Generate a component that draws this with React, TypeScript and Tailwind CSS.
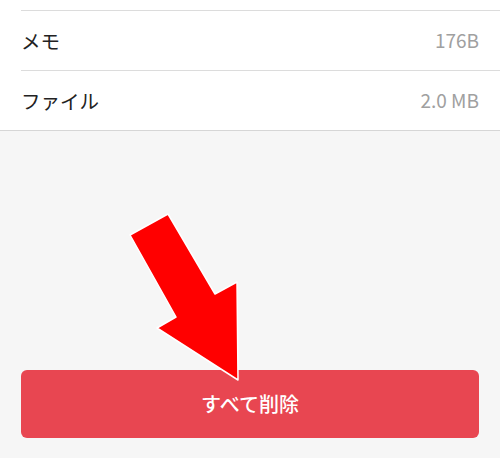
import React from "react";

export default function App() {
  const font = { fontFamily: '"Noto Sans CJK JP", "Noto Sans", sans-serif' };
  return (
    <div className="relative w-[500px] h-[458px] bg-[#f6f6f6] overflow-hidden" style={font}>
      <div className="bg-white border-b border-[#d6d6d6]">
        <div className="h-[10px]" />
        <div className="ml-[21px] border-t border-[#dcdcdc] h-[60px] flex items-center justify-between pr-[21px]">
          <span className="text-[19.5px] text-[#222]">メモ</span>
          <span className="text-[19px] text-[#a0a0a0]">176B</span>
        </div>
        <div className="ml-[21px] border-t border-[#dcdcdc] h-[60px] flex items-center justify-between pr-[21px]">
          <span className="text-[19.5px] text-[#222]">ファイル</span>
          <span className="text-[19px] text-[#a0a0a0]">2.0 MB</span>
        </div>
      </div>
      <div className="px-[21px] pt-[239px]">
        <button className="w-full h-[68px] rounded-[6px] bg-[#e84651] text-white text-[20px] font-medium flex items-center justify-center">
          すべて削除
        </button>
      </div>
      <svg className="absolute left-0 top-0" width="500" height="458" viewBox="0 0 500 458">
        <polygon
          points="130,235 168,214 215,294 237,282 238,380 157,328 176,317"
          fill="#ff0000"
          stroke="#ffffff"
          strokeWidth="1.5"
          strokeLinejoin="round"
        />
      </svg>
    </div>
  );
}
